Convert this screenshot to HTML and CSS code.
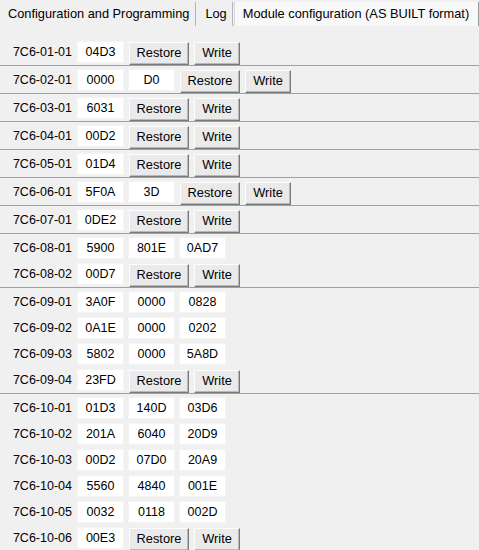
FILE: index.html
```html
<!DOCTYPE html>
<html>
<head>
<meta charset="utf-8">
<link rel="stylesheet" href="styles.css">
</head>
<body>
<div class="tabs">
  <div class="tab first">Configuration and Programming</div>
  <div class="tab log">Log</div>
  <div class="tab active">Module configuration (AS BUILT format)</div>
</div>
<div class="panel">
  <div class="group">
    <div class="row"><span class="label">7C6-01-01</span><span class="field">04D3</span><button class="btn restore">Restore</button><button class="btn write">Write</button></div>
  </div>
  <div class="group">
    <div class="row"><span class="label">7C6-02-01</span><span class="field">0000</span><span class="field">D0</span><button class="btn restore">Restore</button><button class="btn write">Write</button></div>
  </div>
  <div class="group">
    <div class="row"><span class="label">7C6-03-01</span><span class="field">6031</span><button class="btn restore">Restore</button><button class="btn write">Write</button></div>
  </div>
  <div class="group">
    <div class="row"><span class="label">7C6-04-01</span><span class="field">00D2</span><button class="btn restore">Restore</button><button class="btn write">Write</button></div>
  </div>
  <div class="group">
    <div class="row"><span class="label">7C6-05-01</span><span class="field">01D4</span><button class="btn restore">Restore</button><button class="btn write">Write</button></div>
  </div>
  <div class="group">
    <div class="row"><span class="label">7C6-06-01</span><span class="field">5F0A</span><span class="field">3D</span><button class="btn restore">Restore</button><button class="btn write">Write</button></div>
  </div>
  <div class="group">
    <div class="row"><span class="label">7C6-07-01</span><span class="field">0DE2</span><button class="btn restore">Restore</button><button class="btn write">Write</button></div>
  </div>
  <div class="group">
    <div class="row"><span class="label">7C6-08-01</span><span class="field">5900</span><span class="field">801E</span><span class="field">0AD7</span></div>
    <div class="row"><span class="label">7C6-08-02</span><span class="field">00D7</span><button class="btn restore">Restore</button><button class="btn write">Write</button></div>
  </div>
  <div class="group">
    <div class="row"><span class="label">7C6-09-01</span><span class="field">3A0F</span><span class="field">0000</span><span class="field">0828</span></div>
    <div class="row"><span class="label">7C6-09-02</span><span class="field">0A1E</span><span class="field">0000</span><span class="field">0202</span></div>
    <div class="row"><span class="label">7C6-09-03</span><span class="field">5802</span><span class="field">0000</span><span class="field">5A8D</span></div>
    <div class="row"><span class="label">7C6-09-04</span><span class="field">23FD</span><button class="btn restore">Restore</button><button class="btn write">Write</button></div>
  </div>
  <div class="group">
    <div class="row"><span class="label">7C6-10-01</span><span class="field">01D3</span><span class="field">140D</span><span class="field">03D6</span></div>
    <div class="row"><span class="label">7C6-10-02</span><span class="field">201A</span><span class="field">6040</span><span class="field">20D9</span></div>
    <div class="row"><span class="label">7C6-10-03</span><span class="field">00D2</span><span class="field">07D0</span><span class="field">20A9</span></div>
    <div class="row"><span class="label">7C6-10-04</span><span class="field">5560</span><span class="field">4840</span><span class="field">001E</span></div>
    <div class="row"><span class="label">7C6-10-05</span><span class="field">0032</span><span class="field">0118</span><span class="field">002D</span></div>
    <div class="row"><span class="label">7C6-10-06</span><span class="field">00E3</span><button class="btn restore">Restore</button><button class="btn write">Write</button></div>
  </div>
</div>
</body>
</html>
```

FILE: styles.css
```css
html, body {
  margin: 0;
  padding: 0;
  background: #f0f0f0;
  font-family: "Liberation Sans", Arial, sans-serif;
  font-size: 12.8px;
  color: #000;
  overflow: hidden;
}

.tabs {
  display: flex;
  height: 26px;
  align-items: stretch;
  white-space: nowrap;
}

.tab {
  flex: none;
  display: flex;
  align-items: center;
  padding: 0 6px 2px 8px;
  border-right: 1px solid #b4b4b4;
  margin-top: 2px;
}

.tab.log {
  padding: 0 5px 2px 9px;
}

.tab.active {
  background: #f8f8f8;
  margin-left: 1px;
  padding: 0 9px 2px 8px;
  border-left: 1px solid #d8d8d8;
  border-right: 1px solid #9a9a9a;
}

.panel {
  margin-top: 12px;
}

.group {
  padding-top: 1px;
  border-bottom: 1px solid #a0a0a0;
}

.group:last-child {
  border-bottom: none;
}

.row {
  display: flex;
  align-items: center;
  height: 26px;
  gap: 4px;
}

.label {
  width: 72px;
  text-align: right;
  margin-right: 1px;
  font-size: 12.5px;
}

.field {
  width: 47px;
  height: 22px;
  box-sizing: border-box;
  background: #fff;
  border: 1px solid #f4f4f4;
  display: flex;
  align-items: center;
  justify-content: center;
  font-size: 12.5px;
}

.btn {
  font: inherit;
  font-size: 12.8px;
  color: #000;
  height: 23px;
  box-sizing: border-box;
  background: #eaeaea;
  border: 1px solid;
  border-color: #fdfdfd #7a7a7a #7a7a7a #fdfdfd;
  box-shadow: inset -1px -1px 0 #b9b9b9;
  padding: 0 0 1px 0;
  margin: 2px 0 0 1px;
}

.restore {
  width: 60px;
}

.write {
  width: 46px;
}
```
